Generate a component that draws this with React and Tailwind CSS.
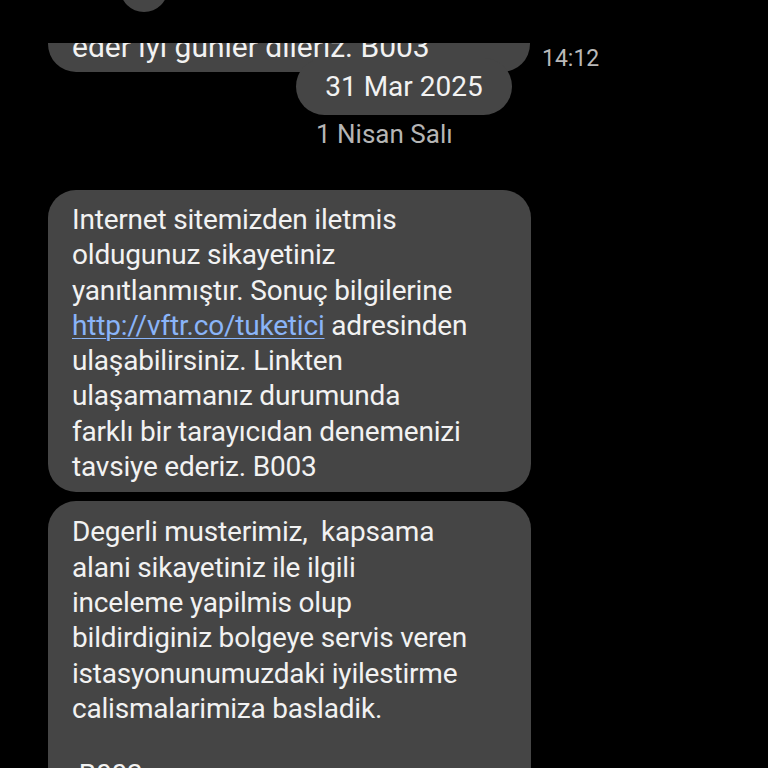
import React from "react";

export default function App() {
  return (
    <div className="relative w-[768px] h-[768px] overflow-hidden bg-black font-['Roboto',sans-serif] text-[#f2f2f2]">
      <div className="absolute left-[120px] top-[-36px] w-[48px] h-[48px] rounded-full bg-[#454545]" />

      <div className="flex items-start pt-[43px]">
        <div className="ml-[48px] w-[482px] h-[29px] overflow-hidden rounded-b-[28px] bg-[#454545]">
          <div className="mt-[-14px] pl-[24px] text-[30px] leading-[36px] whitespace-nowrap">
            eder iyi gunler dileriz. B003
          </div>
        </div>
        <div className="ml-[12px] mt-[2px] text-[23px] leading-[28px] text-[#b9b9b9]">14:12</div>
      </div>

      <div className="relative mt-[-15px] ml-[296px] w-[216px] h-[57px] rounded-full bg-[#454545] flex items-center justify-center text-[28px] leading-[28px]">
        31 Mar 2025
      </div>

      <div className="mt-[5px] ml-[316px] text-[26px] leading-[28px] text-[#b5b5b5]">1 Nisan Salı</div>

      <div className="mt-[42px] ml-[48px] w-[483px] rounded-[28px] bg-[#454545] pt-[12px] pb-[8px] pl-[24px] text-[28px] leading-[35.3px] tracking-[-0.2px] whitespace-nowrap">
        Internet sitemizden iletmis
        <br />
        oldugunuz sikayetiniz
        <br />
        yanıtlanmıştır. Sonuç bilgilerine
        <br />
        <span className="text-[#8ab4f8] underline decoration-1 underline-offset-[3px]">http://vftr.co/tuketici</span> adresinden
        <br />
        ulaşabilirsiniz. Linkten
        <br />
        ulaşamamanız durumunda
        <br />
        farklı bir tarayıcıdan denemenizi
        <br />
        tavsiye ederiz. B003
      </div>

      <div className="mt-[9px] ml-[48px] w-[483px] rounded-[28px] bg-[#454545] pt-[13px] pb-[8px] pl-[24px] text-[28px] leading-[35.3px] tracking-[-0.2px] whitespace-pre">
        {"Degerli musterimiz,  kapsama\nalani sikayetiniz ile ilgili\ninceleme yapilmis olup\nbildirdiginiz bolgeye servis veren\nistasyonunumuzdaki iyilestirme\ncalismalarimiza basladik."}
        <div className="h-[31px]" />
        {" B003"}
      </div>
    </div>
  );
}
